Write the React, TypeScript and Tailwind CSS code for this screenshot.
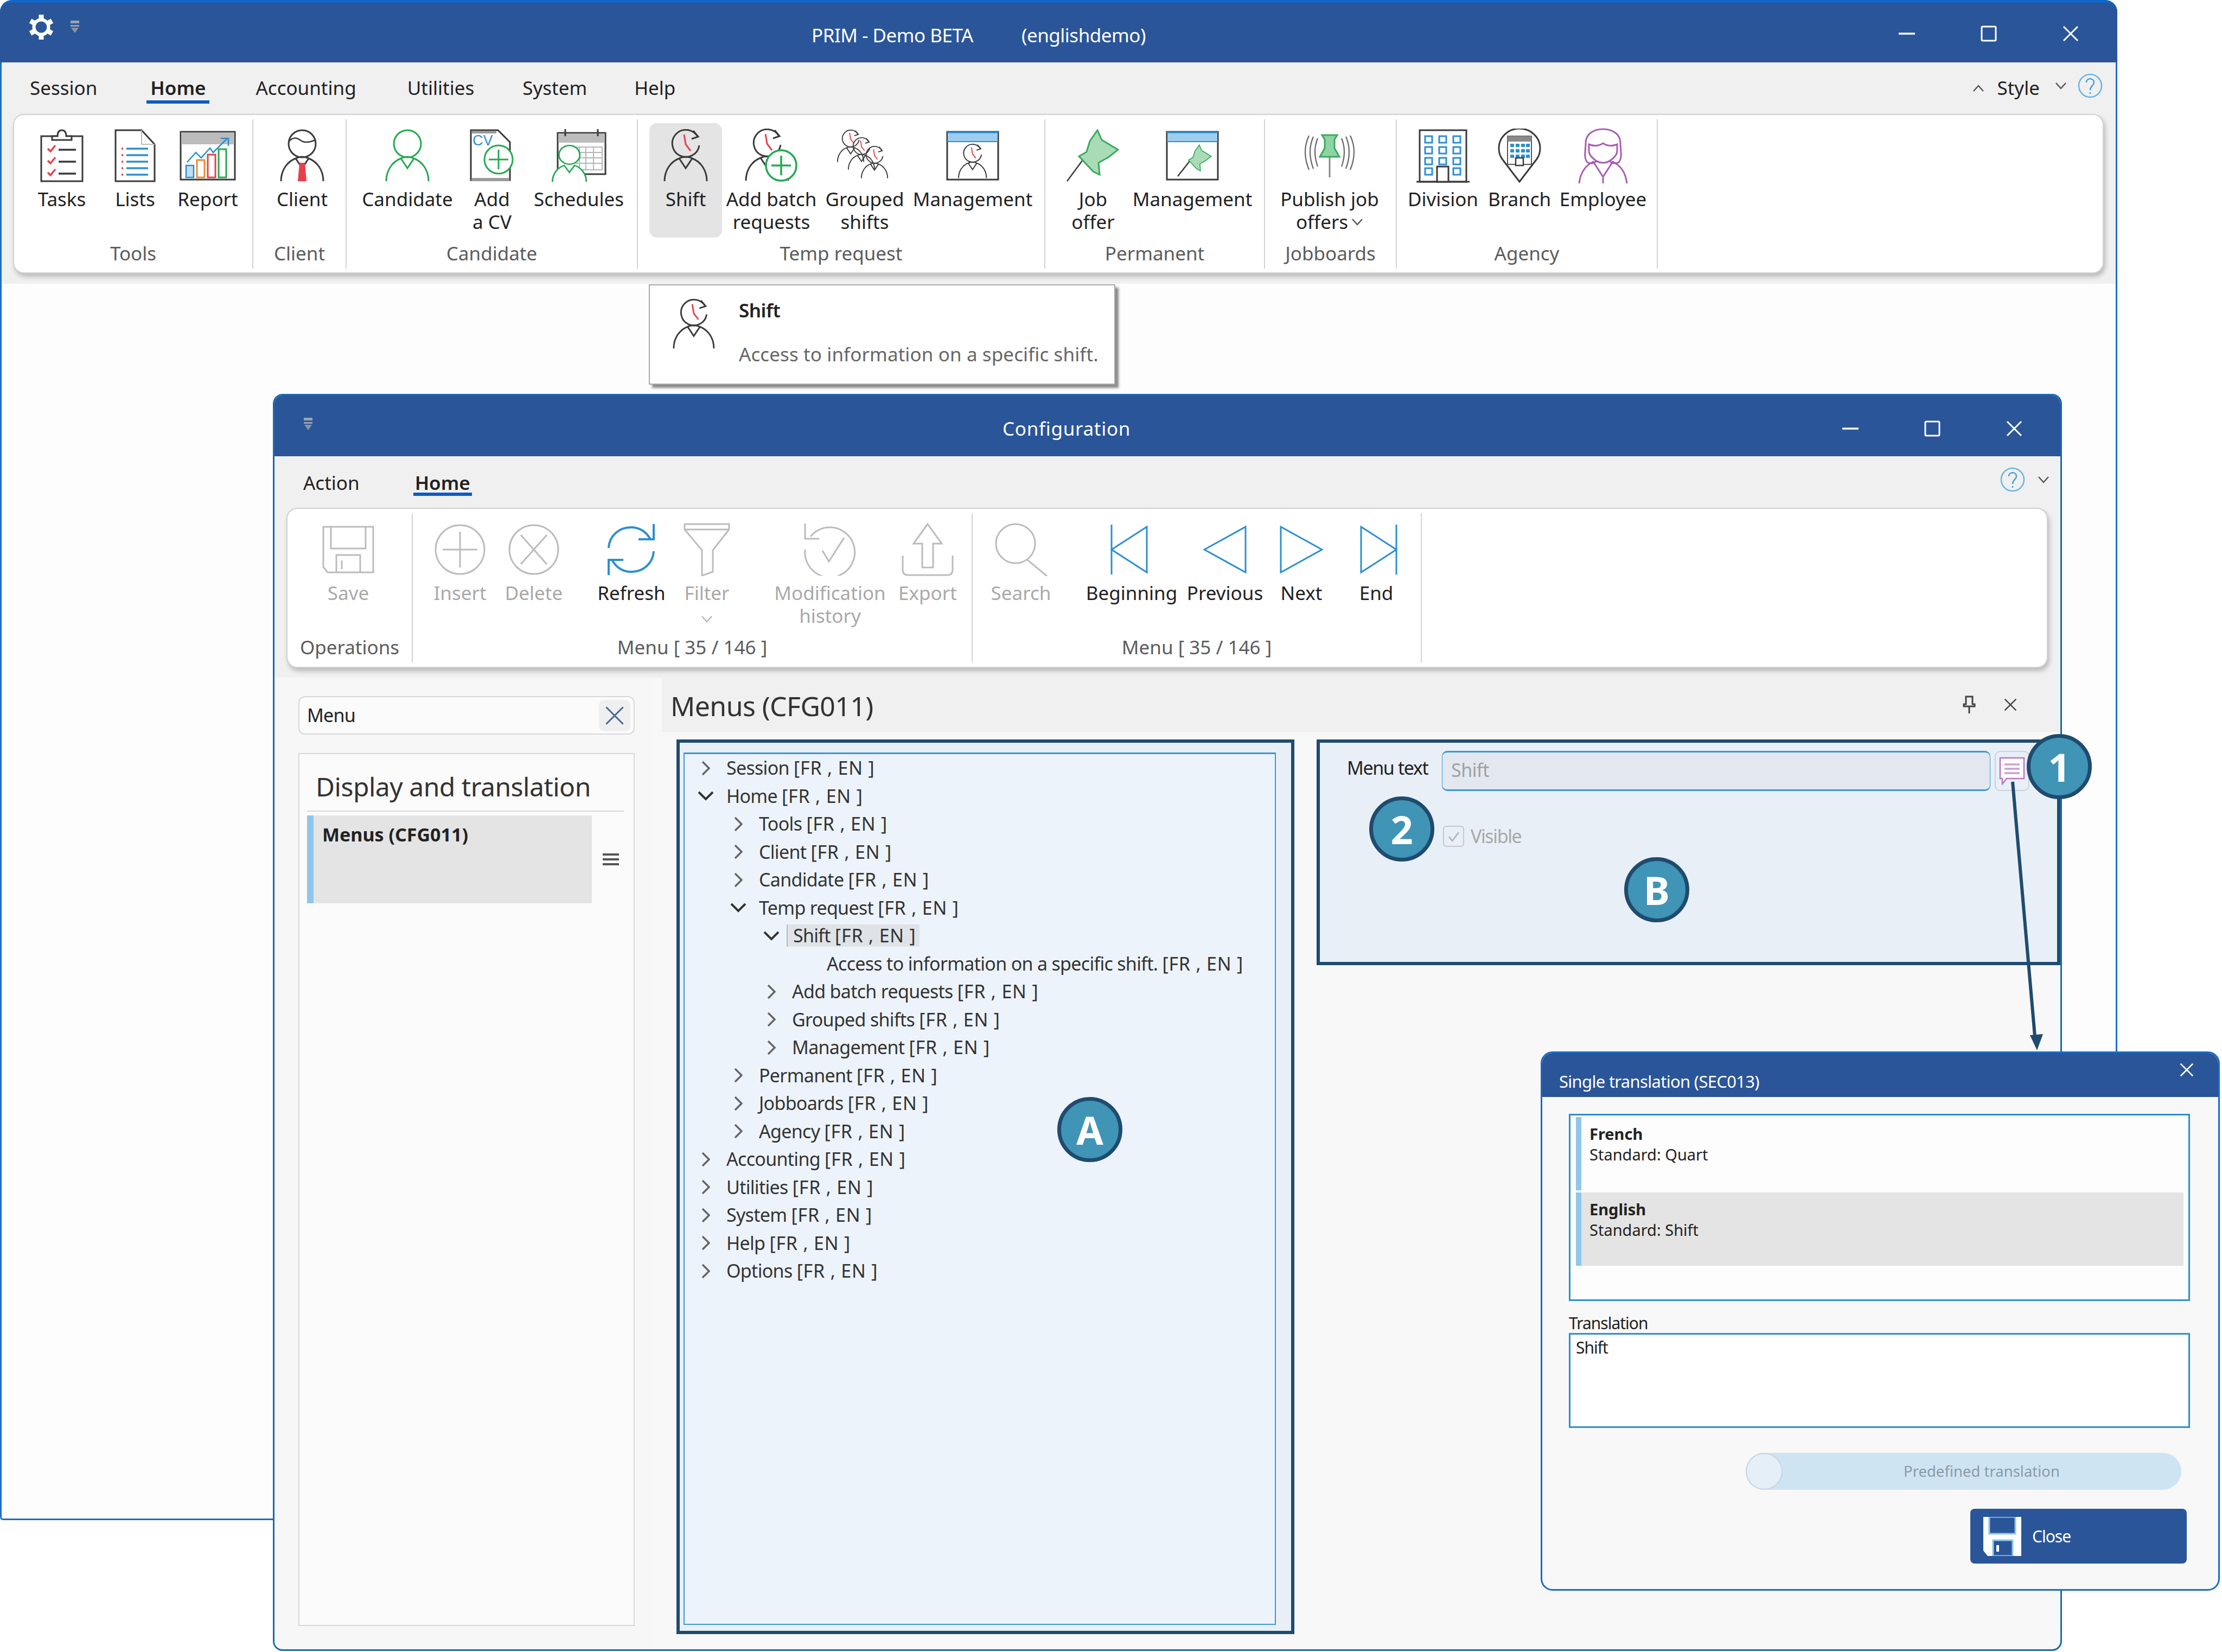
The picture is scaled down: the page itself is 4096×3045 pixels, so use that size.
import React from 'react'

const DARK = '#3a3a3a'
const GREEN = '#23a950'
const BLUE = '#2b8fd0'
const RED = '#e8404a'
const GRAY = '#bcbcbc'

function PersonClock({ color = DARK, hand = RED }: { color?: string; hand?: string }) {
  return (
    <g fill="none" stroke={color} strokeWidth="3">
      <path d="M64 14A25 25 0 1 0 67 30" />
      <path d="M56 3L65 14L53 18" />
      <path d="M39 10L42 28L51 40" stroke={hand} />
      <path d="M3 96C3 76 14 60 30 54L42 72L54 54C70 60 81 76 81 96" />
      <path d="M30 54Q42 48 54 54" />
    </g>
  )
}

function Person({ color }: { color: string }) {
  return (
    <g fill="none" stroke={color} strokeWidth="3">
      <circle cx="42" cy="27" r="25" />
      <path d="M3 96C3 76 14 60 30 54L42 72L54 54C70 60 81 76 81 96" />
      <path d="M30 54Q42 48 54 54" />
    </g>
  )
}

function TasksIcon() {
  return (
    <svg width="80" height="98" viewBox="0 0 80 98" fill="none">
      <rect x="2" y="13" width="76" height="83" stroke={DARK} strokeWidth="3" />
      <path d="M22 20H58V13H48Q48 2 40 2T32 13H22Z" fill="#fff" stroke={DARK} strokeWidth="3" />
      {[36, 58, 80].map((y) => (
        <g key={y}>
          <path d={`M14 ${y}l5 5l9 -11`} stroke={RED} strokeWidth="3.5" />
          <path d={`M34 ${y + 2}H66`} stroke={DARK} strokeWidth="3.5" />
        </g>
      ))}
    </svg>
  )
}

function ListsIcon() {
  return (
    <svg width="76" height="98" viewBox="0 0 76 98" fill="none">
      <path d="M2 2H50L74 28V96H2Z" stroke={DARK} strokeWidth="3" />
      <path d="M50 2V28H74" stroke={GRAY} strokeWidth="2" />
      {[36, 48, 60, 72, 84].map((y) => (
        <g key={y}>
          <path d={`M22 ${y}H62`} stroke={BLUE} strokeWidth="3.5" />
          <path d={`M13 ${y}h3`} stroke={RED} strokeWidth="3.5" />
        </g>
      ))}
    </svg>
  )
}

function ReportIcon() {
  return (
    <svg width="104" height="92" viewBox="0 0 104 92" fill="none">
      <rect x="2" y="2" width="100" height="88" stroke={DARK} strokeWidth="3" fill="#fff" />
      <rect x="3" y="3" width="98" height="22" fill="#bcbcbc" />
      <path d="M14 58L30 40L40 50L56 32L62 40L88 14" stroke={BLUE} strokeWidth="2.5" />
      <path d="M76 14H90V28" stroke={BLUE} strokeWidth="2.5" />
      <rect x="12" y="64" width="14" height="22" stroke={BLUE} strokeWidth="2.5" fill="#bfe0f5" />
      <rect x="32" y="54" width="14" height="32" stroke="#ee8a2d" strokeWidth="3" />
      <rect x="52" y="44" width="14" height="42" stroke={RED} strokeWidth="3" />
      <rect x="72" y="34" width="14" height="52" stroke={GREEN} strokeWidth="3" />
    </svg>
  )
}

function ClientIcon() {
  return (
    <svg width="84" height="98" viewBox="0 0 84 98" fill="none">
      <Person color={DARK} />
      <path d="M18 22Q28 12 38 20T66 20" stroke={DARK} strokeWidth="2.5" />
      <path d="M37 62H47L50 96H34Z" fill={RED} />
    </svg>
  )
}

function CandidateIcon() {
  return (
    <svg width="84" height="98" viewBox="0 0 84 98" fill="none">
      <Person color={GREEN} />
    </svg>
  )
}

function AddCvIcon() {
  return (
    <svg width="82" height="98" viewBox="0 0 82 98" fill="none">
      <path d="M2 2H52L74 24V94H2Z" stroke={DARK} strokeWidth="3" fill="#fff" />
      <rect x="3" y="3" width="46" height="5" fill="#9a9a9a" />
      <rect x="3" y="90" width="70" height="5" fill="#9a9a9a" />
      <text x="5" y="30" fontSize="27" fill={BLUE} fontFamily="Liberation Sans, sans-serif">CV</text>
      <circle cx="53" cy="56" r="26" fill="#fff" stroke={GREEN} strokeWidth="3" />
      <path d="M53 38V74M35 56H71" stroke={GREEN} strokeWidth="3" />
    </svg>
  )
}

function SchedulesIcon() {
  return (
    <svg width="102" height="100" viewBox="0 0 102 100" fill="none">
      <rect x="12" y="8" width="88" height="76" stroke={DARK} strokeWidth="3" fill="#fff" />
      <rect x="13" y="9" width="86" height="17" fill="#bcbcbc" />
      <path d="M26 1V14M86 1V14" stroke={DARK} strokeWidth="3" />
      <path d="M44 34H94V76H44M52 34V76M64 34V76M78 34V76M44 44H94M44 54H94M44 64H94" stroke="#b5b5b5" strokeWidth="2" />
      <g transform="translate(0 29) scale(0.8 0.72)">
        <circle cx="42" cy="27" r="24" fill="#fff" stroke={GREEN} strokeWidth="3.5" />
        <path d="M3 96C3 76 14 60 30 54L42 72L54 54C70 60 81 76 81 96" fill="#fff" stroke={GREEN} strokeWidth="3.5" />
      </g>
    </svg>
  )
}

function ShiftIcon() {
  return (
    <svg width="84" height="98" viewBox="0 0 84 98" fill="none">
      <PersonClock />
    </svg>
  )
}

function AddBatchIcon() {
  return (
    <svg width="100" height="100" viewBox="0 0 100 100" fill="none">
      <PersonClock />
      <circle cx="68" cy="68" r="28" fill="#fff" stroke={GREEN} strokeWidth="3.5" />
      <path d="M68 50V86M50 68H86" stroke={GREEN} strokeWidth="3.5" />
    </svg>
  )
}

function GroupedIcon() {
  return (
    <svg width="104" height="96" viewBox="0 0 104 96" fill="none">
      <g transform="translate(0 0) scale(0.62)"><PersonClock /></g>
      <g transform="translate(20 14) scale(0.62)"><PersonClock /></g>
      <g transform="translate(44 30) scale(0.62)"><PersonClock /></g>
    </svg>
  )
}

function WindowFrame({ children }: { children: React.ReactNode }) {
  return (
    <svg width="98" height="92" viewBox="0 0 98 92" fill="none">
      <rect x="2" y="2" width="94" height="88" stroke={DARK} strokeWidth="3" fill="#fff" />
      <rect x="3" y="3" width="92" height="16" fill="#9fcdf0" />
      <path d="M2 3H96" stroke={BLUE} strokeWidth="3" />
      <path d="M2 20H96" stroke={BLUE} strokeWidth="2" />
      {children}
    </svg>
  )
}

function ManageShiftIcon() {
  return (
    <WindowFrame>
      <g transform="translate(21 24) scale(0.66)"><PersonClock /></g>
    </WindowFrame>
  )
}

const PIN = 'M58 2L66 20L96 38L78 52L60 62L62 84L50 78L24 50L38 42L44 22Z'

function JobIcon() {
  return (
    <svg width="100" height="98" viewBox="0 0 100 98" fill="none">
      <path d="M2 96L36 50" stroke={DARK} strokeWidth="2.5" />
      <path d={PIN} fill="#a9dcb6" stroke="#3aab5c" strokeWidth="3" />
    </svg>
  )
}

function ManageJobIcon() {
  return (
    <WindowFrame>
      <path d="M22 84L44 56" stroke={DARK} strokeWidth="2.5" />
      <g transform="translate(28 25) scale(0.58)">
        <path d={PIN} fill="#a9dcb6" stroke="#3aab5c" strokeWidth="3" />
      </g>
    </WindowFrame>
  )
}

function PublishIcon() {
  return (
    <svg width="98" height="80" viewBox="0 0 98 80" fill="none">
      <path d="M49 42V80" stroke="#8a8a8a" strokeWidth="3" />
      <path d="M35 2H63L58 10V26L67 42H31L40 26V10Z" fill="#8fd4a4" stroke="#3aab5c" strokeWidth="3" />
      <path d="M27 8Q17 32 27 60M19 5Q7 32 19 64M11 3Q-3 32 11 66M71 8Q81 32 71 60M79 5Q91 32 79 64M87 3Q101 32 87 66" stroke="#666" strokeWidth="2.2" />
    </svg>
  )
}

function DivisionIcon() {
  return (
    <svg width="98" height="100" viewBox="0 0 98 100" fill="none">
      <rect x="6" y="3" width="86" height="95" stroke={DARK} strokeWidth="3" />
      <path d="M0 98H98" stroke={DARK} strokeWidth="3" />
      {[14, 34, 54, 73].map((y) =>
        [16, 42, 68].map((x) =>
          y === 73 && x === 42 ? null : (
            <rect key={`${x}-${y}`} x={x} y={y} width="13" height="12" stroke={BLUE} strokeWidth="3" />
          ),
        ),
      )}
      <rect x="38" y="70" width="21" height="28" stroke={DARK} strokeWidth="3" fill="#fff" />
    </svg>
  )
}

function BranchIcon() {
  return (
    <svg width="80" height="100" viewBox="0 0 80 100" fill="none">
      <path d="M40 98L8 56Q2 48 2 36A38 36 0 0 1 78 36Q78 48 72 56Z" stroke={DARK} strokeWidth="3" />
      <rect x="18" y="14" width="44" height="52" fill="#fff" stroke="#555" strokeWidth="2" />
      <rect x="18" y="14" width="44" height="10" fill="#8a8a8a" />
      {[28, 38, 48].map((y) =>
        [23, 33, 43, 52].map((x) => <rect key={`${x}-${y}`} x={x} y={y} width="7" height="6" fill={BLUE} />),
      )}
      <rect x="33" y="54" width="14" height="14" fill="#fff" stroke={DARK} strokeWidth="2.5" />
    </svg>
  )
}

function EmployeeIcon() {
  return (
    <svg width="92" height="102" viewBox="0 0 92 102" fill="none" stroke="#a95cb4" strokeWidth="3">
      <path d="M16 62C10 52 14 42 14 28C14 10 30 2 46 2S78 10 78 28C78 42 82 52 76 62C70 68 60 64 58 60M34 60C32 64 22 68 16 62" />
      <path d="M20 30Q34 36 46 28Q58 36 72 30V42C72 52 58 64 46 64S20 52 20 42Z" />
      <path d="M2 102C4 84 12 70 28 62L46 90L64 62C80 70 88 84 90 102M46 90V102" />
    </svg>
  )
}

function SaveIcon({ color = GRAY }: { color?: string }) {
  return (
    <svg width="96" height="88" viewBox="0 0 96 88" fill="none" stroke={color} strokeWidth="3">
      <path d="M2 2H94V86H10L2 76Z" />
      <path d="M16 2V42H80V2" />
      <path d="M26 86V54H70V86M36 64V80" />
    </svg>
  )
}

function InsertIcon() {
  return (
    <svg width="96" height="94" viewBox="0 0 96 94" fill="none" stroke={GRAY} strokeWidth="3">
      <circle cx="48" cy="47" r="45" />
      <path d="M48 14V80M16 47H80" />
    </svg>
  )
}

function DeleteIcon() {
  return (
    <svg width="96" height="94" viewBox="0 0 96 94" fill="none" stroke={GRAY} strokeWidth="3">
      <circle cx="48" cy="47" r="45" />
      <path d="M24 20L72 74M72 20L24 74" />
    </svg>
  )
}

function RefreshIcon() {
  return (
    <svg width="90" height="94" viewBox="0 0 90 94" fill="none" stroke={BLUE} strokeWidth="4">
      <path d="M3 44C4 22 22 6 44 6C60 6 72 14 80 28" />
      <path d="M86 0V28H58" />
      <path d="M86 50C85 72 67 88 45 88C29 88 17 80 9 66" />
      <path d="M3 94V66H30" />
    </svg>
  )
}

function FilterIcon() {
  return (
    <svg width="86" height="98" viewBox="0 0 86 98" fill="none" stroke={GRAY} strokeWidth="3">
      <path d="M2 2H84V12L54 50V90L34 97V50L2 12Z" />
      <path d="M2 12H84" />
    </svg>
  )
}

function HistoryIcon() {
  return (
    <svg width="100" height="96" viewBox="0 0 100 96" fill="none" stroke={GRAY} strokeWidth="3">
      <path d="M14 24A46 46 0 1 1 4 48" />
      <path d="M4 0V28H30" />
      <path d="M36 50L48 70L76 26" />
    </svg>
  )
}

function ExportIcon() {
  return (
    <svg width="96" height="98" viewBox="0 0 96 98" fill="none" stroke={GRAY} strokeWidth="3">
      <path d="M48 2L22 38H38V82H58V38H74Z" />
      <path d="M2 60V86Q2 96 12 96H84Q94 96 94 86V60" />
    </svg>
  )
}

function SearchIcon() {
  return (
    <svg width="104" height="98" viewBox="0 0 104 98" fill="none" stroke={GRAY} strokeWidth="3">
      <circle cx="42" cy="38" r="36" />
      <path d="M64 68L100 98" />
    </svg>
  )
}

function NavIcon({ d }: { d: string }) {
  return (
    <svg width="80" height="92" viewBox="0 0 80 92" fill="none" stroke={BLUE} strokeWidth="3">
      <path d={d} />
    </svg>
  )
}

function Minimize({ size = 30 }: { size?: number }) {
  return (
    <svg width={size} height={size} viewBox="0 0 30 30" stroke="#fff" strokeWidth="3.5">
      <path d="M0 15H30" />
    </svg>
  )
}

function Maximize({ size = 30 }: { size?: number }) {
  return (
    <svg width={size} height={size} viewBox="0 0 30 30" fill="none" stroke="#fff" strokeWidth="3">
      <rect x="2" y="2" width="26" height="26" rx="2" />
    </svg>
  )
}

function CloseX({ size = 30, color = '#fff', width = 3 }: { size?: number; color?: string; width?: number }) {
  return (
    <svg width={size} height={size} viewBox="0 0 30 30" fill="none" stroke={color} strokeWidth={width}>
      <path d="M2 2L28 28M28 2L2 28" />
    </svg>
  )
}

function QuickMenu() {
  return (
    <svg width="20" height="26" viewBox="0 0 20 26">
      <rect x="2" y="1" width="16" height="5" fill="#9aa3b3" />
      <rect x="2" y="9" width="16" height="3" fill="#9aa3b3" />
      <path d="M3 14H17L10 24Z" fill="#8b93a3" />
    </svg>
  )
}

function Gear() {
  return (
    <svg width="46" height="48" viewBox="0 0 46 48" fill="none">
      <circle cx="23" cy="24" r="13.5" stroke="#fff" strokeWidth="6" />
      {[0, 60, 120, 180, 240, 300].map((a) => (
        <rect key={a} x="18.5" y="1" width="9" height="9" fill="#fff" transform={`rotate(${a} 23 24)`} />
      ))}
    </svg>
  )
}

function Help({ size = 46 }: { size?: number }) {
  return (
    <svg width={size} height={size} viewBox="0 0 46 46" fill="none">
      <circle cx="23" cy="23" r="21" stroke="#67b5e5" strokeWidth="2.5" />
      <path d="M16 17C16 8 30 8 30 17C30 23 23 23 23 31" stroke="#4a9fd8" strokeWidth="2.5" />
      <path d="M23 35V38" stroke="#4a9fd8" strokeWidth="2.5" />
    </svg>
  )
}

function Caret({ dir, color = '#555' }: { dir: 'up' | 'down'; color?: string }) {
  return (
    <svg width="22" height="14" viewBox="0 0 22 14" fill="none" stroke={color} strokeWidth="2.5">
      <path d={dir === 'up' ? 'M2 12L11 2L20 12' : 'M2 2L11 12L20 2'} />
    </svg>
  )
}

function Tool({ w, icon, lines, muted, active, ml }: { w: string; icon: React.ReactNode; lines: React.ReactNode[]; muted?: boolean; active?: boolean; ml?: string }) {
  return (
    <div className={`${w} ${ml ?? ''} ${active ? 'bg-[#e4e4e4] rounded-[14px]' : ''} h-[211px] shrink-0 flex flex-col items-center pt-[8px]`}>
      <div className="h-[104px] flex items-center justify-center">{icon}</div>
      <div className={`mt-[7px] text-center text-[35px] leading-[42px] whitespace-nowrap ${muted ? 'text-[#a9a9a9]' : 'text-[#222]'}`}>
        {lines.map((l, i) => (
          <div key={i}>{l}</div>
        ))}
      </div>
    </div>
  )
}

function Group({ w, pl, label, children }: { w: string; pl: string; label: string; children: React.ReactNode }) {
  return (
    <div className={`${w} h-[275px] mt-[8px] border-r-2 border-[#d4d4d4] flex flex-col shrink-0`}>
      <div className={`${pl} flex pt-[7px]`}>{children}</div>
      <div className="mt-[8px] text-center text-[35px] leading-[42px] text-[#5c5c5c] whitespace-nowrap">{label}</div>
    </div>
  )
}

const shadowRibbon = 'border-2 border-[#d2d2d2] bg-white rounded-[20px] shadow-[3px_6px_8px_rgba(0,0,0,0.22)]'

function MainWindow() {
  return (
    <div className="w-[3903px] h-[2802px] flex flex-col bg-[#fdfdfd] border-x-[3px] border-b-[3px] border-[#1d6fc4] rounded-t-[22px] rounded-b-[6px]">
      <div className="h-[115px] -mx-[3px] shrink-0 bg-[#2a5599] border-t-[5px] border-[#1066c8] rounded-t-[22px] flex items-center text-white">
        <div className="ml-[53px] -mt-[20px] flex items-center gap-[29px]">
          <Gear />
          <QuickMenu />
        </div>
        <div className="ml-[1348px] mt-[10px] flex gap-[89px] text-[35px] tracking-[-0.5px]">
          <span>PRIM - Demo BETA</span>
          <span>(englishdemo)</span>
        </div>
        <div className="ml-auto mr-[11px] mt-[4px] flex items-center">
          <div className="w-[151px] flex justify-center"><Minimize /></div>
          <div className="w-[151px] flex justify-center"><Maximize /></div>
          <div className="w-[151px] flex justify-center"><CloseX /></div>
        </div>
      </div>
      <div className="h-[95px] shrink-0 bg-[#f0f0f0] flex items-center pl-[52px] text-[35px] text-[#222]">
        <span>Session</span>
        <span className="relative ml-[98px] font-semibold">
          Home
          <span className="absolute -left-[7px] -right-[7px] top-[49px] h-[6px] bg-[#0c5cc2]" />
        </span>
        <span className="ml-[92px]">Accounting</span>
        <span className="ml-[94px]">Utilities</span>
        <span className="ml-[89px]">System</span>
        <span className="ml-[87px]">Help</span>
        <div className="ml-auto mr-[24px] flex items-center">
          <Caret dir="up" />
          <span className="ml-[24px]">Style</span>
          <span className="ml-[28px] -mt-[10px]"><Caret dir="down" /></span>
          <span className="ml-[20px] -mt-[10px]"><Help /></span>
        </div>
      </div>
      <div className="bg-[#f0f0f0] h-[313px] shrink-0 pl-[21px] pr-[22px]">
        <div className={`${shadowRibbon} h-[294px] flex`}>
          <Group w="w-[441px]" pl="pl-[20px]" label="Tools">
            <Tool w="w-[136px]" icon={<TasksIcon />} lines={['Tasks']} />
            <Tool w="w-[134px]" icon={<ListsIcon />} lines={['Lists']} />
            <Tool w="w-[134px]" icon={<ReportIcon />} lines={['Report']} />
          </Group>
          <Group w="w-[172px]" pl="pl-[14px]" label="Client">
            <Tool w="w-[152px]" icon={<ClientIcon />} lines={['Client']} />
          </Group>
          <Group w="w-[537px]" pl="pl-[10px]" label="Candidate">
            <Tool w="w-[204px]" icon={<CandidateIcon />} lines={['Candidate']} />
            <Tool w="w-[108px]" icon={<AddCvIcon />} lines={['Add', 'a CV']} />
            <Tool w="w-[212px]" icon={<SchedulesIcon />} lines={['Schedules']} />
          </Group>
          <Group w="w-[751px]" pl="pl-[21px]" label="Temp request">
            <Tool w="w-[134px]" active icon={<ShiftIcon />} lines={['Shift']} />
            <Tool w="w-[182px]" icon={<AddBatchIcon />} lines={['Add batch', 'requests']} />
            <Tool w="w-[162px]" icon={<GroupedIcon />} lines={['Grouped', 'shifts']} />
            <Tool w="w-[236px]" icon={<ManageShiftIcon />} lines={['Management']} />
          </Group>
          <Group w="w-[405px]" pl="pl-[24px]" label="Permanent">
            <Tool w="w-[128px]" icon={<JobIcon />} lines={['Job', 'offer']} />
            <Tool w="w-[238px]" icon={<ManageJobIcon />} lines={['Management']} />
          </Group>
          <Group w="w-[243px]" pl="pl-[7px]" label="Jobboards">
            <Tool
              w="w-[224px]"
              icon={<PublishIcon />}
              lines={[
                'Publish job',
                <span key="o" className="inline-flex items-center gap-[6px]">offers<Caret dir="down" /></span>,
              ]}
            />
          </Group>
          <Group w="w-[481px]" pl="pl-[6px]" label="Agency">
            <Tool w="w-[158px]" icon={<DivisionIcon />} lines={['Division']} />
            <Tool w="w-[124px]" icon={<BranchIcon />} lines={['Branch']} />
            <Tool w="w-[184px]" icon={<EmployeeIcon />} lines={['Employee']} />
          </Group>
        </div>
      </div>
    </div>
  )
}

function Tooltip() {
  return (
    <div className="absolute left-[1196px] top-[524px] w-[860px] h-[185px] bg-white border-2 border-[#a8a8a8] shadow-[6px_6px_4px_rgba(0,0,0,0.45)] flex">
      <div className="ml-[41px] mt-[25px] w-[80px] scale-[0.95] origin-top-left"><ShiftIcon /></div>
      <div className="ml-[43px]">
        <div className="mt-[25px] text-[35px] leading-[42px] font-semibold text-[#222] tracking-[-0.5px]">Shift</div>
        <div className="mt-[39px] text-[35px] leading-[42px] text-[#666] tracking-[0.1px] whitespace-nowrap">Access to information on a specific shift.</div>
      </div>
    </div>
  )
}

type Node = { label: string; level: number; open?: boolean; leaf?: boolean; selected?: boolean }

const treeNodes: Node[] = [
  { label: 'Session', level: 0 },
  { label: 'Home', level: 0, open: true },
  { label: 'Tools', level: 1 },
  { label: 'Client', level: 1 },
  { label: 'Candidate', level: 1 },
  { label: 'Temp request', level: 1, open: true },
  { label: 'Shift', level: 2, open: true, selected: true },
  { label: 'Access to information on a specific shift.', level: 3, leaf: true },
  { label: 'Add batch requests', level: 2 },
  { label: 'Grouped shifts', level: 2 },
  { label: 'Management', level: 2 },
  { label: 'Permanent', level: 1 },
  { label: 'Jobboards', level: 1 },
  { label: 'Agency', level: 1 },
  { label: 'Accounting', level: 0 },
  { label: 'Utilities', level: 0 },
  { label: 'System', level: 0 },
  { label: 'Help', level: 0 },
  { label: 'Options', level: 0 },
]

const indents = ['pl-[1px]', 'pl-[61px]', 'pl-[122px]', 'pl-[186px]']

function TreeRow({ node }: { node: Node }) {
  return (
    <div className={`${indents[node.level]} h-[51.5px] flex items-center text-[34px] tracking-[-0.7px] text-[#333] whitespace-nowrap`}>
      <div className="w-[76px] shrink-0 flex justify-center">
        {node.leaf ? null : node.open ? (
          <svg width="30" height="18" viewBox="0 0 30 18" fill="none" stroke="#333" strokeWidth="4">
            <path d="M2 2L15 15L28 2" />
          </svg>
        ) : (
          <svg width="16" height="28" viewBox="0 0 16 28" fill="none" stroke="#666" strokeWidth="3.5">
            <path d="M2 2L14 14L2 26" />
          </svg>
        )}
      </div>
      <span className={node.selected ? '-ml-[10px] pl-[10px] pr-[6px] leading-[41px] bg-[#dfe3e8] border-l-2 border-[#b8bcc2]' : ''}>
        {node.label} <span className="tracking-[0.8px]">[FR , EN ]</span>
      </span>
    </div>
  )
}

function ConfigWindow() {
  return (
    <div className="absolute left-[503px] top-[726px] w-[3298px] h-[2317px] flex flex-col bg-[#f8f8f8] border-[3px] border-t-[3px] border-[#1a6aad] rounded-[18px] overflow-hidden">
      <div className="h-[112px] shrink-0 bg-[#2a5599] flex items-center text-white">
        <div className="ml-[52px] -mt-[6px]"><QuickMenu /></div>
        <div className="ml-[1270px] mt-[10px] text-[35px] tracking-[0.7px]">Configuration</div>
        <div className="ml-auto mr-[10px] mt-[10px] flex items-center">
          <div className="w-[151px] flex justify-center"><Minimize /></div>
          <div className="w-[151px] flex justify-center"><Maximize /></div>
          <div className="w-[151px] flex justify-center"><CloseX /></div>
        </div>
      </div>
      <div className="h-[95px] shrink-0 bg-[#f0f0f0] flex items-center pl-[53px] pt-[4px] text-[35px] text-[#222]">
        <span>Action</span>
        <span className="relative ml-[102px] font-semibold">
          Home
          <span className="absolute -left-[3px] -right-[3px] top-[44px] h-[6px] bg-[#0c5cc2]" />
        </span>
        <div className="ml-auto mr-[20px] -mt-[14px] flex items-center gap-[23px]">
          <Help />
          <Caret dir="down" />
        </div>
      </div>
      <div className="h-[313px] shrink-0 bg-[#f0f0f0] pl-[22px] pr-[23px]">
        <div className={`${shadowRibbon} h-[295px] flex`}>
          <Group w="w-[231px]" pl="pl-[1px]" label="Operations">
            <Tool w="w-[222px]" muted icon={<SaveIcon />} lines={['Save']} />
          </Group>
          <Group w="w-[1032px]" pl="pl-[21px]" label="Menu [ 35 / 146 ]">
            <Tool w="w-[132px]" muted icon={<InsertIcon />} lines={['Insert']} />
            <Tool w="w-[140px]" muted icon={<DeleteIcon />} lines={['Delete']} />
            <Tool w="w-[180px]" ml="ml-[20px]" icon={<RefreshIcon />} lines={['Refresh']} />
            <Tool w="w-[98px]" muted icon={<FilterIcon />} lines={['Filter', <span key="c" className="inline-block"><Caret dir="down" color="#b5b5b5" /></span>]} />
            <Tool w="w-[220px]" ml="ml-[68px]" muted icon={<HistoryIcon />} lines={['Modification', 'history']} />
            <Tool w="w-[140px]" muted icon={<ExportIcon />} lines={['Export']} />
          </Group>
          <Group w="w-[828px]" pl="pl-[20px]" label="Menu [ 35 / 146 ]">
            <Tool w="w-[138px]" muted icon={<SearchIcon />} lines={['Search']} />
            <Tool w="w-[200px]" ml="ml-[35px]" icon={<NavIcon d="M3 0V92M3 46L68 4V88Z" />} lines={['Beginning']} />
            <Tool w="w-[144px]" icon={<NavIcon d="M2 46L78 4V88Z" />} lines={['Previous']} />
            <Tool w="w-[138px]" icon={<NavIcon d="M78 46L2 4V88Z" />} lines={['Next']} />
            <Tool w="w-[138px]" icon={<NavIcon d="M77 0V92M77 46L12 4V88Z" />} lines={['End']} />
          </Group>
        </div>
      </div>
      <div className="flex-1 flex min-h-0">
        <div className="w-[697px] shrink-0 pl-[44px] pr-[33px] pt-[34px] bg-[#f7f7f7]">
          <div className="h-[71px] border-2 border-[#d8d8d8] rounded-[12px] bg-[#fbfbfb] flex items-center pl-[14px] pr-[6px] text-[34px] tracking-[-0.8px] text-[#222]">
            <span>Menu</span>
            <div className="ml-auto w-[58px] h-[58px] rounded-[10px] bg-[#efefef] flex items-center justify-center">
              <CloseX size={36} color="#4c6e96" width={2.5} />
            </div>
          </div>
          <div className="mt-[34px] h-[1609px] border-2 border-[#d8d8d8] bg-[#fbfbfb] px-[14px] pt-[30px]">
            <div className="pl-[16px] pb-[14px] text-[48px] leading-[60px] tracking-[-0.5px] text-[#333] border-b-2 border-[#d8d8d8] mr-[4px] whitespace-nowrap">Display and translation</div>
            <div className="mt-[7px] flex items-center">
              <div className="w-[525px] h-[162px] shrink-0 bg-[#e4e4e4] border-l-[12px] border-[#8fc6ea] pl-[16px] pt-[10px] text-[34px] font-bold text-[#222]">Menus (CFG011)</div>
              <div className="ml-[20px] flex flex-col gap-[5px]">
                <span className="block w-[30px] h-[4px] bg-[#555]" />
                <span className="block w-[30px] h-[4px] bg-[#555]" />
                <span className="block w-[30px] h-[4px] bg-[#555]" />
              </div>
            </div>
          </div>
        </div>
        <div className="flex-1 min-w-0 ml-[17px] flex flex-col">
          <div className="h-[100px] shrink-0 bg-[#f0f0f0] flex items-center pl-[16px] pr-[80px]">
            <span className="mt-[4px] text-[50px] tracking-[-0.6px] text-[#333]">Menus (CFG011)</span>
            <svg className="ml-auto" width="24" height="34" viewBox="0 0 24 34" fill="none" stroke="#444" strokeWidth="3">
              <path d="M6 2H18V16H22V20H2V16H6ZM12 20V33" />
            </svg>
            <div className="ml-[52px]"><CloseX size={24} color="#444" /></div>
          </div>
          <div className="flex-1 flex pl-[27px] pt-[14px] items-start">
            <div className="w-[1139px] h-[1649px] shrink-0 border-[6px] border-[#1f4b6e] bg-[#e8eff6] pl-[7px] pr-[28px] pt-[18px]">
              <div className="h-[1608px] border-2 border-t-[3px] border-[#3b97d3] bg-[#edf3fa] flex flex-col">
                {treeNodes.map((n) => (
                  <TreeRow key={n.label} node={n} />
                ))}
              </div>
            </div>
            <div className="ml-[41px] flex-1 h-[416px] border-[6px] border-[#1f4b6e] bg-[#e8eff6]">
              <div className="flex items-start pt-[15px] pl-[50px]">
                <span className="w-[175px] text-[34px] leading-[74px] tracking-[-1.4px] text-[#222] whitespace-nowrap -mt-[6px]">Menu text</span>
                <div className="w-[1011px] h-[74px] bg-[#e3e8f0] border-y-[3px] border-x-[1.5px] border-[#3b97d3] rounded-[10px] pl-[16px] pb-[3px] flex items-center text-[34px] tracking-[-0.5px] text-[#a0a0a0]">Shift</div>
                <div className="ml-[8px] w-[64px] h-[74px] border-2 border-[#d0d0d8] rounded-[10px] flex items-center justify-center">
                  <svg width="48" height="52" viewBox="0 0 48 52" fill="none" stroke="#b878c4" strokeWidth="2.5">
                    <path d="M2 2H46V40H14L6 50V40H2Z" fill="#fff" />
                    <path d="M10 14H38M10 22H38M10 30H38" stroke="#c8a0d4" strokeWidth="3.5" />
                  </svg>
                </div>
              </div>
              <div className="mt-[58px] pl-[227px] flex items-center">
                <div className="w-[39px] h-[39px] border-2 border-[#c8c8cc] rounded-[6px] flex items-center justify-center">
                  <svg width="24" height="22" viewBox="0 0 24 22" fill="none" stroke="#b0b0b4" strokeWidth="2.5">
                    <path d="M3 11L9 19L21 3" />
                  </svg>
                </div>
                <span className="ml-[12px] text-[34px] tracking-[-1.4px] text-[#a8a8a8]">Visible</span>
              </div>
            </div>
          </div>
        </div>
      </div>
    </div>
  )
}

function LangItem({ name, text, selected }: { name: string; text: string; selected?: boolean }) {
  return (
    <div className={`h-[135px] pl-[15px] pt-[12px] border-l-[10px] border-[#8fc6ea] text-[29px] leading-[38px] text-[#222] ${selected ? 'bg-[#e4e4e4]' : ''}`}>
      <div className="font-bold">{name}</div>
      <div>{text}</div>
    </div>
  )
}

function TranslationDialog() {
  return (
    <div className="absolute left-[2840px] top-[1938px] w-[1252px] h-[994px] flex flex-col bg-[#f8f8f8] border-[3px] border-[#1a6cc4] rounded-[22px] overflow-hidden">
      <div className="h-[81px] shrink-0 bg-[#2a5599] flex text-white relative">
        <span className="ml-[31px] mt-[30px] text-[31px] leading-[44px] tracking-[-0.7px]">Single translation (SEC013)</span>
        <span className="ml-auto mr-[45px] mt-[18px]"><CloseX size={26} /></span>
      </div>
      <div className="mt-[31px] ml-[49px] mr-[52px] h-[345px] shrink-0 border-[3px] border-[#2b8fd0] bg-[#fdfdfd] pl-[10px] pr-[9px] pt-[3px] flex flex-col gap-[4px]">
        <LangItem name="French" text="Standard: Quart" />
        <LangItem name="English" text="Standard: Shift" selected />
      </div>
      <div className="mt-[23px] mx-[49px] text-[30px] leading-[36px] tracking-[-1px] text-[#222]">Translation</div>
      <div className="ml-[49px] mr-[52px] h-[175px] shrink-0 border-[3px] border-[#2b8fd0] bg-white pl-[10px] pt-[6px] text-[30px] leading-[36px] tracking-[-1px] text-[#222]">Shift</div>
      <div className="mt-[46px] ml-[375px] w-[803px] h-[68px] shrink-0 rounded-full bg-[#cfe4f3] flex items-center">
        <div className="w-[68px] h-[68px] rounded-full bg-[#e4eff8] border-2 border-[#c8d4dc]" />
        <span className="ml-[223px] text-[27.5px] text-[#8a9aa6]">Predefined translation</span>
      </div>
      <div className="mt-[35px] ml-[789px] w-[399px] h-[101px] shrink-0 rounded-[8px] bg-[#2a5599] flex items-center pl-[24px] text-white text-[30px] tracking-[-1px]">
        <svg width="70" height="72" viewBox="0 0 70 72" fill="none">
          <path d="M0 0H70V72H8L0 62Z" fill="#fff" />
          <rect x="11" y="0" width="48" height="31" fill="#2a5599" stroke="#8fc6ea" strokeWidth="3" />
          <rect x="18" y="43" width="36" height="29" fill="#2a5599" stroke="#8fc6ea" strokeWidth="3" />
          <rect x="24" y="52" width="5" height="12" fill="#fff" />
        </svg>
        <span className="ml-[20px]">Close</span>
      </div>
    </div>
  )
}

function Badge({ pos, text }: { pos: string; text: string }) {
  return (
    <div className={`absolute ${pos} w-[120px] h-[120px] rounded-full bg-[#4094b6] border-[7px] border-[#1f4b6e] flex items-center justify-center text-white font-bold text-[72px] leading-none`}>
      {text}
    </div>
  )
}

export default function App() {
  return (
    <div className="relative w-[4096px] h-[3045px] bg-white overflow-hidden font-['Noto_Sans','Open_Sans',sans-serif]">
      <MainWindow />
      <Tooltip />
      <ConfigWindow />
      <TranslationDialog />
      {/* arrow from the translate button to the dialog */}
      <svg className="absolute left-[3690px] top-[1430px]" width="90" height="510" viewBox="0 0 90 510" fill="none">
        <path d="M20 11L61 480" stroke="#1f4b6e" strokeWidth="6" />
        <path d="M52 478L76 476L65 506Z" fill="#1f4b6e" />
      </svg>
      <Badge pos="left-[3736px] top-[1353px]" text="1" />
      <Badge pos="left-[2524px] top-[1468px]" text="2" />
      <Badge pos="left-[2994px] top-[1580px]" text="B" />
      <Badge pos="left-[1949px] top-[2022px]" text="A" />
    </div>
  )
}
